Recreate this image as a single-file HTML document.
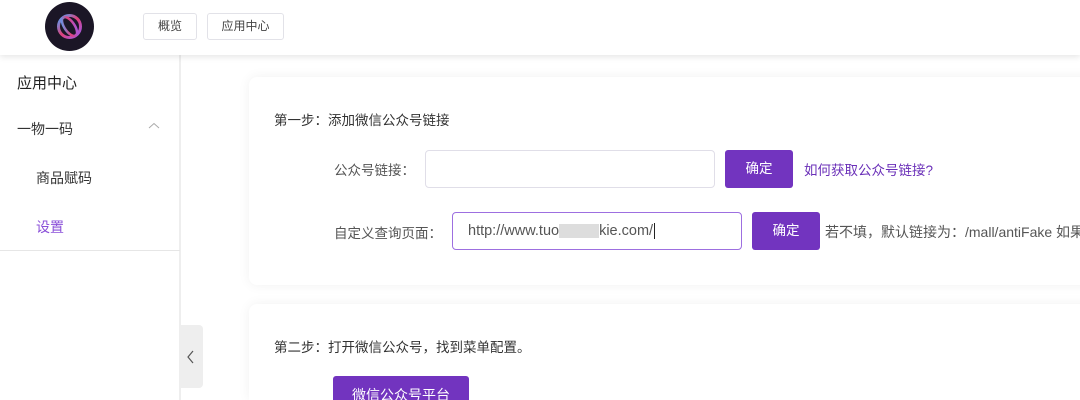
<!DOCTYPE html>
<html><head><meta charset="utf-8"><style>
*{box-sizing:border-box;margin:0;padding:0}
html,body{width:1080px;height:400px;overflow:hidden}
body{background:#fff;font-family:"Liberation Sans","Noto Sans CJK SC",sans-serif;color:#333;position:relative;font-size:13.5px}
.abs{position:absolute}
.hdr{left:0;top:0;width:1080px;height:55px;background:#fff;box-shadow:0 2px 6px rgba(0,0,0,.1);z-index:3}
.logo{left:45px;top:2px;width:49px;height:49px;border-radius:50%;background:#1b1626}
.tab{top:13px;height:27px;border:1px solid #e2e2e8;border-radius:3px;font-size:12px;color:#444;line-height:25px;text-align:center}
.side{left:0;top:55px;width:181px;height:345px;border-right:2px solid #eee}
.card{left:249px;width:860px;background:#fff;border-radius:8px;box-shadow:0 0 12px rgba(0,0,0,.06)}
.inp{height:38px;border:1px solid #e0dee8;border-radius:4px}
.btn{height:38px;background:#7234bf;color:#fff;border-radius:3px;text-align:center;line-height:38px;font-size:13.5px}
</style></head><body>
<div class="abs hdr">
 <div class="abs logo"><svg width="49" height="49" viewBox="0 0 49 49"><defs><linearGradient id="g" x1="0" y1="0" x2="1" y2="1"><stop offset="0" stop-color="#4aa8ff"/><stop offset=".5" stop-color="#e0407a"/><stop offset="1" stop-color="#9a5cf0"/></linearGradient></defs><circle cx="24.5" cy="24.5" r="11" fill="none" stroke="url(#g)" stroke-width="3"/><ellipse cx="24.5" cy="24.5" rx="5" ry="11" transform="rotate(-35 24.5 24.5)" fill="none" stroke="url(#g)" stroke-width="2.5"/></svg></div>
 <div class="abs tab" style="left:143px;width:54px">概览</div>
 <div class="abs tab" style="left:207px;width:77px">应用中心</div>
</div>
<div class="abs side">
 <div class="abs" style="left:17px;top:17px;font-size:15px;color:#222">应用中心</div>
 <div class="abs" style="left:17px;top:64px;font-size:14px;color:#333">一物一码</div>
 <svg class="abs" style="left:148px;top:67px" width="12" height="8"><path d="M1 6 L6 1.5 L11 6" fill="none" stroke="#aaa" stroke-width="1"/></svg>
 <div class="abs" style="left:36px;top:113px;font-size:14px;color:#333">商品赋码</div>
 <div class="abs" style="left:36px;top:162px;font-size:14px;color:#8a4fd8">设置</div>
 <div class="abs" style="left:0;top:195px;width:180px;height:1px;background:#e6e6e6"></div>
</div>
<div class="abs" style="left:181px;top:325px;width:22px;height:63px;background:#eee;border-radius:0 4px 4px 0"></div>
<svg class="abs" style="left:186px;top:349px" width="10" height="16"><path d="M7 2 L2 8 L7 14" fill="none" stroke="#555" stroke-width="1.2"/></svg>
<div class="abs card" style="top:77px;height:208px"></div>
<div class="abs card" style="top:304px;height:96px;border-radius:8px 8px 0 0"></div>
<div class="abs" style="left:274px;top:109px">第一步：添加微信公众号链接</div>
<div class="abs" style="left:334px;top:159px;color:#555">公众号链接：</div>
<div class="abs inp" style="left:425px;top:150px;width:290px"></div>
<div class="abs btn" style="left:725px;top:150px;width:68px">确定</div>
<div class="abs" style="left:804px;top:159px;color:#6a2fb8;font-size:13.5px">如何获取公众号链接?</div>
<div class="abs" style="left:334px;top:222px;color:#555">自定义查询页面：</div>
<div class="abs inp" style="left:452px;top:212px;width:290px;border-color:#9d6fe0;padding-left:15px;line-height:36px;color:#555;font-size:14.5px">http://www.tuo<span style="display:inline-block;width:40px;height:14px;background:#ddd;vertical-align:middle"></span>kie.com/<span style="border-left:1px solid #222;margin-left:1px"></span></div>
<div class="abs btn" style="left:752px;top:212px;width:68px">确定</div>
<div class="abs" style="left:825px;top:222px;color:#555;white-space:nowrap;font-size:14px">若不填，默认链接为：/mall/antiFake 如果</div>
<div class="abs" style="left:274px;top:336px">第二步：打开微信公众号，找到菜单配置。</div>
<div class="abs btn" style="left:333px;top:376px;width:136px;font-size:14px">微信公众号平台</div>
</body></html>
